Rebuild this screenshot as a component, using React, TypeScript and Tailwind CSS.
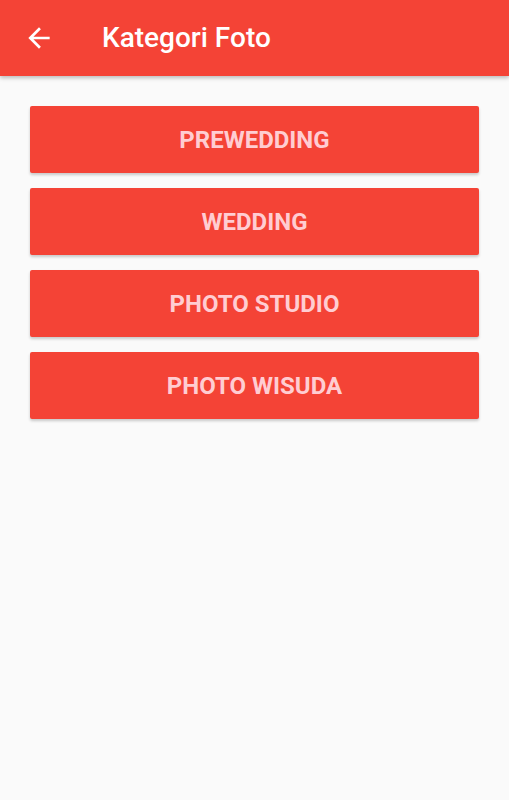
export default function App() {
  const items = ['PREWEDDING', 'WEDDING', 'PHOTO STUDIO', 'PHOTO WISUDA'];
  return (
    <div className="min-h-[800px] bg-[#fafafa] font-['Roboto',sans-serif]">
      {/* Toolbar */}
      <div className="relative z-10 h-[76px] bg-[#f44336] flex items-center shadow-[0_2px_4px_rgba(0,0,0,0.25)]">
        <div className="w-[102px] pl-[23px] flex items-center">
          <svg width="32" height="32" viewBox="0 0 24 24" fill="#ffffff">
            <path d="M20 11H7.83l5.59-5.59L12 4l-8 8 8 8 1.41-1.41L7.83 13H20v-2z" />
          </svg>
        </div>
        <span className="text-white text-[28px] font-medium">Kategori Foto</span>
      </div>

      {/* Category buttons */}
      <div className="flex flex-col gap-[15px] px-[30px] pt-[30px]">
        {items.map((label) => (
          <button
            key={label}
            className="h-[67px] w-full bg-[#f44336] rounded-[2px] shadow-[0_2px_3px_rgba(0,0,0,0.2)] text-[#ffcdd2] text-[24px] font-bold"
          >
            {label}
          </button>
        ))}
      </div>
    </div>
  );
}
